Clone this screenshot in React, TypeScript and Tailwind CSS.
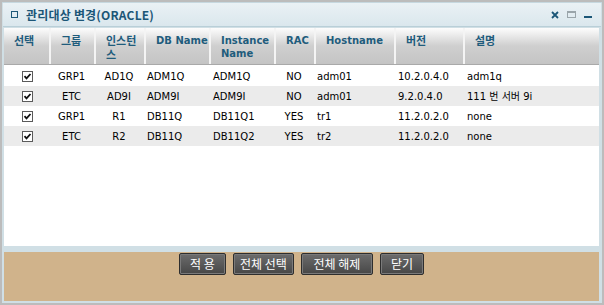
import React from "react";

const cols = "grid grid-cols-[45px_45px_50px_65px_65px_40px_80px_69px_136px]";
const ko = { fontFamily: '"Noto Sans CJK KR", "DejaVu Sans", sans-serif' };
const lat = { fontFamily: '"DejaVu Sans", "Noto Sans CJK KR", sans-serif' };

const headers: { t: string[]; k: boolean }[] = [
  { t: ["선택"], k: true },
  { t: ["그룹"], k: true },
  { t: ["인스턴", "스"], k: true },
  { t: ["DB Name"], k: false },
  { t: ["Instance", "Name"], k: false },
  { t: ["RAC"], k: false },
  { t: ["Hostname"], k: false },
  { t: ["버전"], k: true },
  { t: ["설명"], k: true },
];

const rows = [
  ["GRP1", "AD1Q", "ADM1Q", "ADM1Q", "NO", "adm01", "10.2.0.4.0", "adm1q"],
  ["ETC", "AD9I", "ADM9I", "ADM9I", "NO", "adm01", "9.2.0.4.0", "111 번 서버 9i"],
  ["GRP1", "R1", "DB11Q", "DB11Q1", "YES", "tr1", "11.2.0.2.0", "none"],
  ["ETC", "R2", "DB11Q", "DB11Q2", "YES", "tr2", "11.2.0.2.0", "none"],
];

function Check() {
  return (
    <div className="w-[11px] h-[11px] border border-[#5a5a5a] bg-white flex items-center justify-center">
      <svg width="9" height="9" viewBox="0 0 9 9">
        <path d="M1.5 4.2 L3.5 6.4 L7.5 2" stroke="#111" strokeWidth="1.8" fill="none" />
      </svg>
    </div>
  );
}

function Btn({ label, w }: { label: string; w: string }) {
  return (
    <div
      className={`${w} h-[22px] flex items-center justify-center rounded-[2px] border border-[#2e2e2e] bg-gradient-to-b from-[#6c6c6c] to-[#474747] text-white text-[12px] leading-none shadow-[inset_0_0_0_1px_#7a7a7a]`}
      style={ko}
    >
      {label}
    </div>
  );
}

export default function App() {
  return (
    <div className="w-[604px] h-[305px] bg-[#bcbcbc] pt-[2px] pl-[2px] pr-[2px] pb-[2px]">
      <div className="w-[600px] h-[301px] bg-[#d0dfe5] border-t border-[#c6d8e0] flex flex-col">
        <div className="h-[24px] mx-[1px] bg-gradient-to-b from-[#eaf1f5] to-[#dae7ed] border-b border-[#b9cfd8] flex items-center">
          <div className="ml-[8px] w-[7px] h-[7px] border border-[#1d5878]" />
          <div className="ml-[8px] text-[12px] font-bold text-[#1b5677] leading-none tracking-[0.2px]" style={ko}>
            관리대상 변경(ORACLE)
          </div>
          <div className="ml-auto flex items-center mr-[9px]">
            <svg width="8" height="8" viewBox="0 0 8 8">
              <path d="M1 1 L7 7 M7 1 L1 7" stroke="#1b5677" strokeWidth="1.8" />
            </svg>
            <div className="ml-[8px] w-[9px] h-[7px] border border-[#9aa5aa] border-t-2" />
            <div className="ml-[8px] w-[8px] h-[2px] bg-[#1b5677] mt-[5px]" />
          </div>
        </div>
        <div className="mt-[1px] ml-[2px] mr-[3px] h-[218px] bg-white flex flex-col">
          <div className={`${cols} h-[37px] border-b border-[#a9a9a9]`}>
            {headers.map((h, i) => (
              <div
                key={i}
                className={`bg-gradient-to-b from-[#fdfdfd] via-[#cfcfcf] to-[#c4c4c4] ${i > 0 ? "border-l-2 border-l-[#f4f4f4]" : ""} pl-[10px] pt-[5px] text-[#1f5c7c] font-bold ${h.k ? "text-[11px] leading-[14px]" : "text-[10px] leading-[13px] pt-[6px]"}`}
                style={h.k ? ko : lat}
              >
                {h.t.map((l, j) => (
                  <div key={j}>{l}</div>
                ))}
              </div>
            ))}
          </div>
          <div className="h-[1px]" />
          {rows.map((r, i) => (
            <div
              key={i}
              className={`${cols} h-[20px] items-center text-[10px] text-black ${i % 2 === 1 ? "bg-[#ebebeb]" : "bg-white"}`}
              style={lat}
            >
              <div className="flex justify-center pl-[1px]">
                <Check />
              </div>
              <div className="text-center">{r[0]}</div>
              <div className="text-center">{r[1]}</div>
              <div className="pl-[3px]">{r[2]}</div>
              <div className="pl-[4px]">{r[3]}</div>
              <div className="text-center">{r[4]}</div>
              <div className="pl-[3px]">{r[5]}</div>
              <div className="pl-[4px]">{r[6]}</div>
              <div className="pl-[4px]">{r[7]}</div>
            </div>
          ))}
        </div>
        <div className="mt-[6px] ml-[2px] mr-[3px] h-[49px] bg-[#d0b38b] flex justify-center gap-[7px] pt-[1px]">
          <Btn label="적 용" w="w-[47px]" />
          <Btn label="전체 선택" w="w-[61px]" />
          <Btn label="전체 해제" w="w-[72px]" />
          <Btn label="닫기" w="w-[44px]" />
        </div>
      </div>
    </div>
  );
}
